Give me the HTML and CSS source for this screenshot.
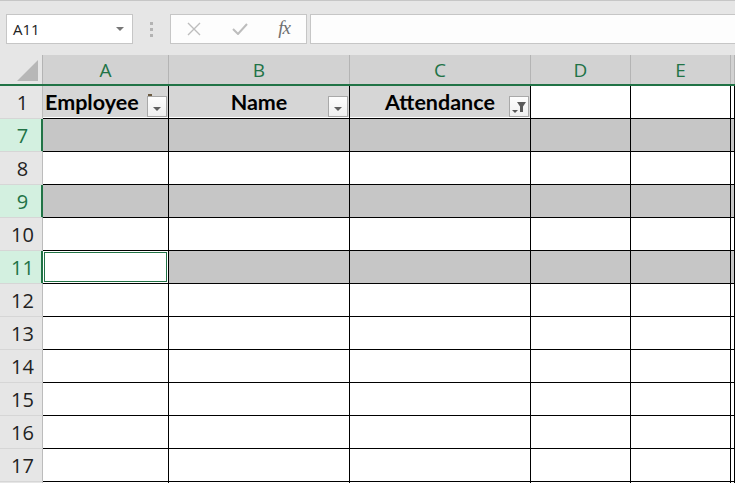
FILE: index.html
```html
<!DOCTYPE html>
<html lang="en">
<head>
    <meta charset="UTF-8">
    <title>Sheet</title>
    <link rel="stylesheet" href="styles.css">
</head>
<body>

<div class="toolbar">
    <div class="name-box">
        <span class="name-value">A11</span>
        <span class="name-arrow"></span>
    </div>
    <div class="grip"><i></i><i></i><i></i></div>
    <div class="fx-buttons">
        <svg class="fx-icon" width="14" height="14" viewBox="0 0 14 14">
            <path d="M1 1 L13 13 M13 1 L1 13" stroke="#bdbdbd" stroke-width="1.4" fill="none"/>
        </svg>
        <svg class="fx-icon" width="16" height="12" viewBox="0 0 16 12">
            <path d="M1 6 L6 11 L15 1" stroke="#bdbdbd" stroke-width="2" fill="none"/>
        </svg>
        <span class="fx-label">fx</span>
    </div>
    <div class="formula-input"></div>
</div>

<div class="sheet">
    <div class="row col-heads">
        <div class="corner"><span class="corner-mark"></span></div>
        <div class="col-head">A</div>
        <div class="col-head">B</div>
        <div class="col-head">C</div>
        <div class="col-head">D</div>
        <div class="col-head">E</div>
        <div class="col-head"></div>
    </div>

    <div class="row title-row">
        <div class="row-head">1</div>
        <div class="cell title left">Employee<span class="filter-ghost"></span><span class="filter-btn"><span class="tri"></span></span></div>
        <div class="cell title">Name<span class="filter-btn"><span class="tri"></span></span></div>
        <div class="cell title">Attendance<span class="filter-btn on">
            <svg width="18" height="18" viewBox="0 0 18 18">
                <path d="M7 4 H16 L13 8.5 V14 H10 V8.5 Z" fill="#5a5a5a"/>
                <path d="M2 12 H8 L5 15 Z" fill="#5a5a5a"/>
            </svg>
        </span></div>
        <div class="cell white"></div>
        <div class="cell white"></div>
        <div class="cell white"></div>
    </div>

    <div class="row shaded">
        <div class="row-head picked">7</div>
        <div class="cell"></div><div class="cell"></div><div class="cell"></div>
        <div class="cell"></div><div class="cell"></div><div class="cell"></div>
    </div>
    <div class="row">
        <div class="row-head">8</div>
        <div class="cell"></div><div class="cell"></div><div class="cell"></div>
        <div class="cell"></div><div class="cell"></div><div class="cell"></div>
    </div>
    <div class="row shaded">
        <div class="row-head picked">9</div>
        <div class="cell"></div><div class="cell"></div><div class="cell"></div>
        <div class="cell"></div><div class="cell"></div><div class="cell"></div>
    </div>
    <div class="row">
        <div class="row-head">10</div>
        <div class="cell"></div><div class="cell"></div><div class="cell"></div>
        <div class="cell"></div><div class="cell"></div><div class="cell"></div>
    </div>
    <div class="row shaded">
        <div class="row-head picked">11</div>
        <div class="cell active"></div><div class="cell"></div><div class="cell"></div>
        <div class="cell"></div><div class="cell"></div><div class="cell"></div>
    </div>
    <div class="row">
        <div class="row-head">12</div>
        <div class="cell"></div><div class="cell"></div><div class="cell"></div>
        <div class="cell"></div><div class="cell"></div><div class="cell"></div>
    </div>
    <div class="row">
        <div class="row-head">13</div>
        <div class="cell"></div><div class="cell"></div><div class="cell"></div>
        <div class="cell"></div><div class="cell"></div><div class="cell"></div>
    </div>
    <div class="row">
        <div class="row-head">14</div>
        <div class="cell"></div><div class="cell"></div><div class="cell"></div>
        <div class="cell"></div><div class="cell"></div><div class="cell"></div>
    </div>
    <div class="row">
        <div class="row-head">15</div>
        <div class="cell"></div><div class="cell"></div><div class="cell"></div>
        <div class="cell"></div><div class="cell"></div><div class="cell"></div>
    </div>
    <div class="row">
        <div class="row-head">16</div>
        <div class="cell"></div><div class="cell"></div><div class="cell"></div>
        <div class="cell"></div><div class="cell"></div><div class="cell"></div>
    </div>
    <div class="row">
        <div class="row-head">17</div>
        <div class="cell"></div><div class="cell"></div><div class="cell"></div>
        <div class="cell"></div><div class="cell"></div><div class="cell"></div>
    </div>
    <div class="row">
        <div class="row-head"></div>
        <div class="cell"></div><div class="cell"></div><div class="cell"></div>
        <div class="cell"></div><div class="cell"></div><div class="cell"></div>
    </div>
</div>

</body>
</html>
```

FILE: styles.css
```css
:root {
    --chrome-bg: #e6e6e6;
    --chrome-line: #c6c6c6;
    --head-bg: #d2d2d2;
    --head-line: #b4b4b4;
    --excel-green: #217346;
    --picked-bg: #d3f0e0;
    --shade: #c6c6c6;
    --grid: #000;
}

html, body {
    margin: 0;
    height: 100%;
    overflow: hidden;
    background: #fff;
    font-family: "Open Sans", "Noto Sans", sans-serif;
}

/* --- formula bar --- */
.toolbar {
    display: flex;
    align-items: flex-start;
    height: 55px;
    padding: 13px 0 0 6px;
    box-sizing: border-box;
    background: var(--chrome-bg);
    border-top: 1px solid var(--chrome-line);
}

.name-box {
    display: flex;
    align-items: center;
    justify-content: space-between;
    width: 127px;
    height: 30px;
    box-sizing: border-box;
    padding: 0 8px 0 6px;
    background: #fff;
    border: 1px solid var(--chrome-line);
}

.name-value {
    font-size: 15px;
    color: #222;
}

.name-arrow {
    width: 0;
    height: 0;
    border-left: 4px solid transparent;
    border-right: 4px solid transparent;
    border-top: 4px solid #777;
}

.grip {
    display: flex;
    flex-direction: column;
    gap: 3px;
    width: 37px;
    align-items: center;
    padding-top: 8px;
}

.grip i {
    display: block;
    width: 3px;
    height: 3px;
    background: #b3b3b3;
}

.fx-buttons {
    display: flex;
    align-items: center;
    justify-content: space-between;
    width: 137px;
    height: 30px;
    box-sizing: border-box;
    padding: 0 16px 0 16px;
    background: #fdfdfd;
    border: 1px solid var(--chrome-line);
}

.fx-label {
    font-family: "Liberation Serif", serif;
    font-style: italic;
    font-size: 19px;
    color: #707070;
    letter-spacing: -1px;
    margin-top: -3px;
}

.formula-input {
    flex: 1;
    height: 30px;
    margin-left: 3px;
    box-sizing: border-box;
    background: #fdfdfd;
    border: 1px solid var(--chrome-line);
    border-right: none;
}

/* --- grid --- */
.sheet {
    display: flex;
    flex-direction: column;
}

.row {
    display: grid;
    grid-template-columns: 43px 126px 181px 181px 100px 100px 1fr;
    height: 33px;
}

.col-heads {
    height: 31px;
    background: var(--head-bg);
    border-bottom: 2px solid var(--excel-green);
    box-sizing: border-box;
}

.corner {
    position: relative;
    background: var(--chrome-bg);
    border-right: 1px solid var(--head-line);
}

.corner-mark {
    position: absolute;
    right: 4px;
    bottom: 3px;
    width: 0;
    height: 0;
    border-left: 21px solid transparent;
    border-bottom: 21px solid #b7b7b7;
}

.col-head {
    display: flex;
    align-items: center;
    justify-content: center;
    font-size: 19px;
    color: var(--excel-green);
    border-right: 1px solid var(--head-line);
    padding-top: 1px;
}

.row-head {
    display: flex;
    align-items: center;
    justify-content: center;
    font-size: 20px;
    color: #222;
    background: var(--chrome-bg);
    border-right: 1px solid #bcbcbc;
    border-bottom: 1px solid #d6d6d6;
    padding-left: 3px;
}

.row-head.picked {
    background: var(--picked-bg);
    color: var(--excel-green);
    border-right-color: var(--excel-green);
    box-shadow: inset -1px 0 0 var(--excel-green);
}

.cell {
    position: relative;
    border-right: 1px solid var(--grid);
    border-bottom: 1px solid var(--grid);
}

.shaded .cell {
    background: var(--shade);
}

.shaded .cell.active {
    background: #fff;
    box-shadow: inset 0 0 0 1px #fff, inset 0 0 0 2px var(--excel-green);
}

.title-row .cell {
    box-shadow: inset 0 -1px 0 #fff;
}

.cell.title {
    display: flex;
    align-items: center;
    justify-content: center;
    background: #d6d6d6;
    font-family: Lato, "Open Sans", sans-serif;
    font-weight: 700;
    font-size: 21.5px;
    color: #000;
    padding-bottom: 1px;
}

.cell.title.left {
    justify-content: flex-start;
    padding-left: 2px;
}

.filter-btn {
    position: absolute;
    right: 1px;
    bottom: 1px;
    width: 20px;
    height: 21px;
    box-sizing: border-box;
    display: flex;
    align-items: center;
    justify-content: center;
    background: linear-gradient(#fdfdfd, #f0f0f0);
    border: 1px solid #a9a9a9;
}

.filter-btn .tri {
    width: 0;
    height: 0;
    margin-top: 4px;
    border-left: 4px solid transparent;
    border-right: 4px solid transparent;
    border-top: 4px solid #5f5f5f;
}

.filter-ghost {
    position: absolute;
    right: 16px;
    top: 8px;
    width: 4px;
    height: 15px;
    border: 2px solid #6b5a40;
    border-right: none;
    box-sizing: border-box;
}
```
